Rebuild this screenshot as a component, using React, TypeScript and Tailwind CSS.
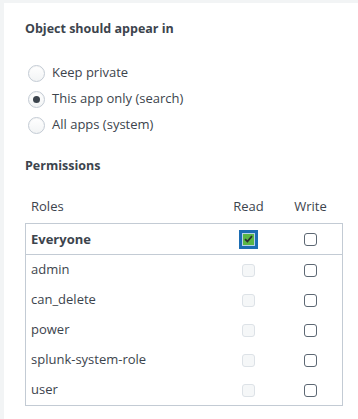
import React from "react"

const font = { fontFamily: '"Open Sans", "Liberation Sans", sans-serif' }

function Radio({ label, checked }: { label: string; checked?: boolean }) {
  return (
    <div className="flex h-[26px] items-center">
      <span className="flex h-[17px] w-[17px] items-center justify-center rounded-full border border-[#c3cbd4] bg-gradient-to-b from-white to-[#f2f4f5] shadow-[inset_0_1px_1px_rgba(0,0,0,0.04)]">
        {checked && <span className="h-[7px] w-[7px] rounded-full bg-[#3c444d]" />}
      </span>
      <span className="ml-[7px] text-[13px] text-[#3c444d]">{label}</span>
    </div>
  )
}

function Box({ kind }: { kind: "on" | "off" | "disabled" }) {
  if (kind === "on") {
    return (
      <span className="flex h-[19px] w-[19px] items-center justify-center bg-[#1c6db3] p-[2px]">
        <span className="flex h-[13px] w-[13px] items-center justify-center border border-[#b7d3ea] bg-[#5ab645]">
          <svg width="9" height="8" viewBox="0 0 9 8">
            <path d="M1 4.2 L3.4 6.5 L8 1.2" fill="none" stroke="#2b3033" strokeWidth="1.8" />
          </svg>
        </span>
      </span>
    )
  }
  if (kind === "disabled") {
    return <span className="block h-[13px] w-[13px] rounded-[3px] border border-[#dde2e7] bg-[#f5f7f8]" />
  }
  return <span className="block h-[13px] w-[13px] rounded-[3px] border border-[#5c6773] bg-white" />
}

export default function App() {
  const roles = ["admin", "can_delete", "power", "splunk-system-role", "user"]

  return (
    <div className="h-[419px] bg-[#f2f4f5] pl-[4px] pt-[3px]" style={font}>
      <div className="h-full bg-white pl-[21px] pr-[15px] pt-[18px] text-[#3c444d]">
        <h2 className="text-[12.5px] font-bold leading-4">Object should appear in</h2>

        <div className="mt-[23px] pl-[3px]">
          <Radio label="Keep private" />
          <Radio label="This app only (search)" checked />
          <Radio label="All apps (system)" />
        </div>

        <h2 className="mt-[20px] text-[12.5px] font-bold leading-4">Permissions</h2>

        <div className="mt-[17px] grid h-[32px] grid-cols-[1fr_61px_63px] items-center border-x border-transparent text-[13px]">
          <span className="pl-[5px]">Roles</span>
          <span className="text-center">Read</span>
          <span className="text-center">Write</span>
        </div>

        <div className="border border-[#c3cbd4] text-[13px]">
          <div className="grid h-[31px] grid-cols-[1fr_61px_63px] items-center border-b border-[#c3cbd4]">
            <span className="pl-[5px] pt-[2px] font-bold">Everyone</span>
            <span className="flex justify-center">
              <Box kind="on" />
            </span>
            <span className="flex justify-center">
              <Box kind="off" />
            </span>
          </div>
          {roles.map((r) => (
            <div key={r} className="grid h-[30px] grid-cols-[1fr_61px_63px] items-center">
              <span className="pl-[5px]">{r}</span>
              <span className="flex justify-center">
                <Box kind="disabled" />
              </span>
              <span className="flex justify-center">
                <Box kind="off" />
              </span>
            </div>
          ))}
        </div>
      </div>
    </div>
  )
}
